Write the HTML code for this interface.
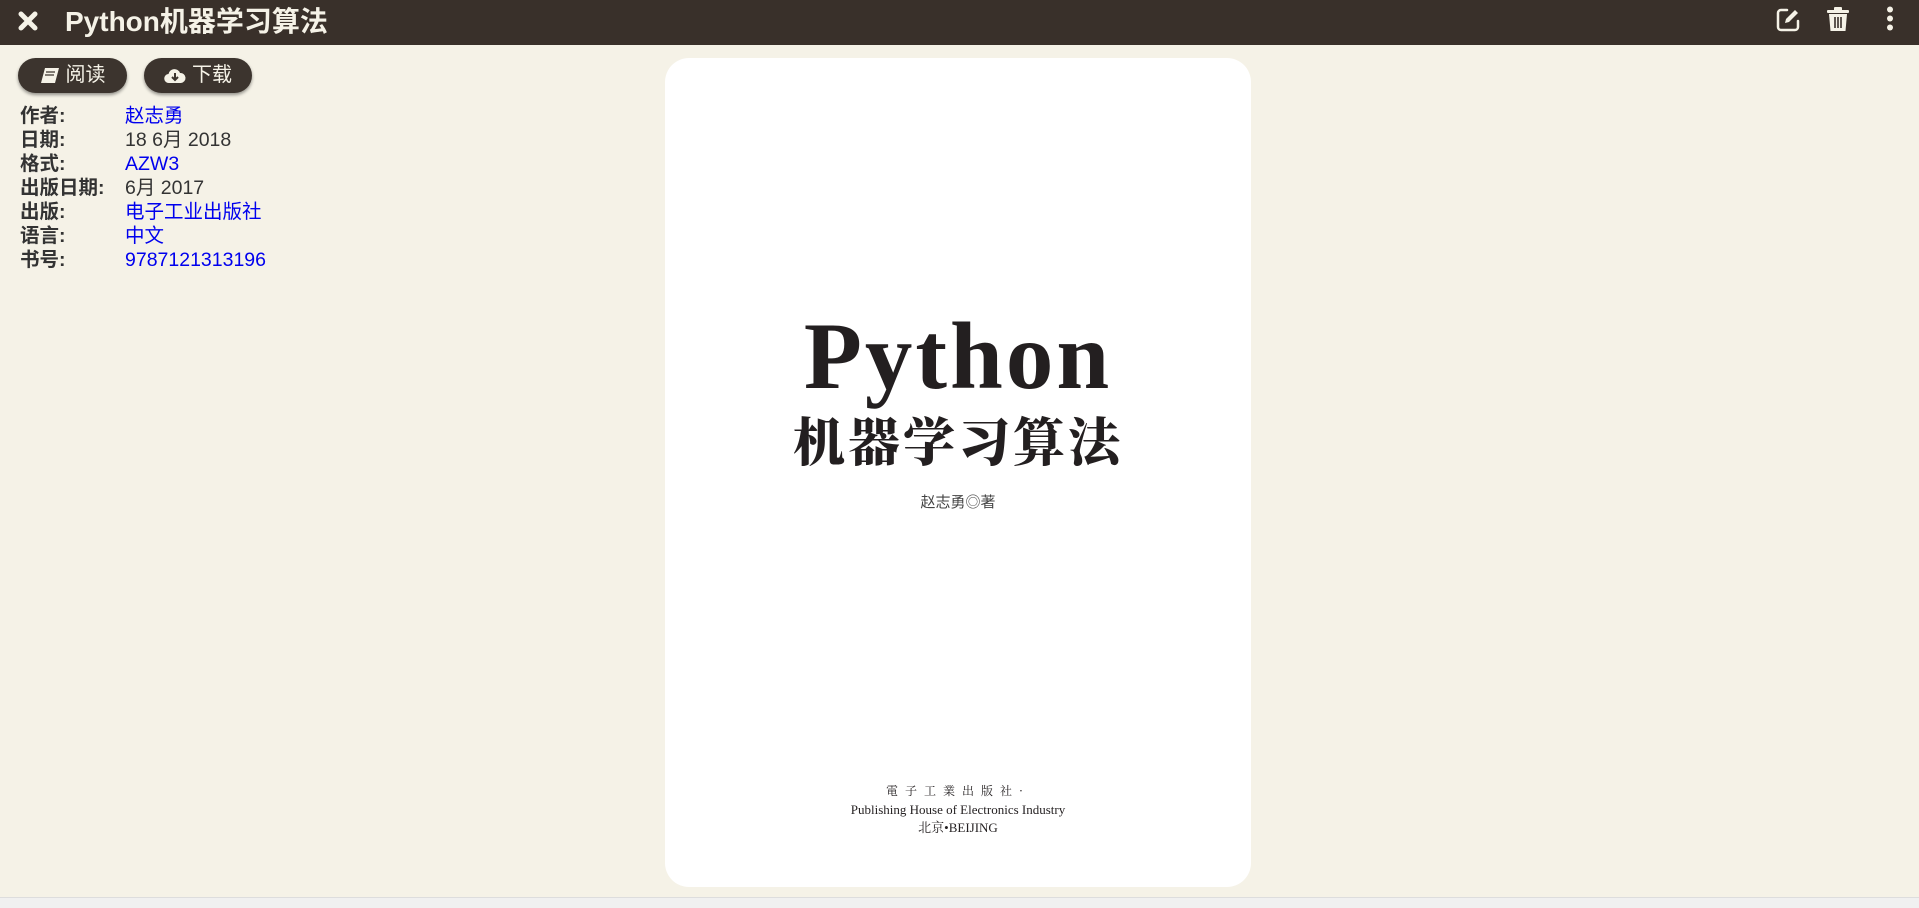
<!DOCTYPE html>
<html><head><meta charset="utf-8"><style>
*{margin:0;padding:0;box-sizing:border-box}
body{width:1919px;height:908px;background:#f5f2e7;font-family:"Liberation Sans","Noto Sans CJK SC",sans-serif;position:relative;overflow:hidden}
.hdr{position:absolute;left:0;top:0;width:1919px;height:45px;background:#39302a;color:#f5f2e7}
.title{position:absolute;left:65px;top:4px;font-size:28px;font-weight:bold;line-height:36px}
.btn{position:absolute;top:58px;height:35px;border-radius:18px;background:#3c342e;color:#f5f2e7;font-size:20px;line-height:35px;box-shadow:0 2px 3px rgba(0,0,0,.4);display:flex;align-items:center;justify-content:center;gap:6px}
.info{position:absolute;left:20px;top:104px;font-size:19.5px;line-height:24px;color:#333}
.info div{display:flex}
.info b{width:105px;display:inline-block}
.info a{color:#0000ee;text-decoration:none}
.cover{position:absolute;left:665px;top:58px;width:586px;height:829px;background:#fff;border-radius:24px;text-align:center;color:#231f20}
.foot{position:absolute;left:0;top:897px;width:1919px;height:11px;background:#f0f0f0;border-top:1px solid #ddd}
</style></head><body>
<div class="hdr">
<svg style="position:absolute;left:17px;top:10px" width="22" height="22" viewBox="0 0 22 22"><path d="M4 4L18 18M18 4L4 18" stroke="#f5f2e7" stroke-width="5" stroke-linecap="round"/></svg>
<div class="title">Python机器学习算法</div>
<svg style="position:absolute;left:1774px;top:6px" width="28" height="28" viewBox="0 0 28 28"><path d="M13 4H7a3 3 0 0 0-3 3v14a3 3 0 0 0 3 3h14a3 3 0 0 0 3-3v-6" fill="none" stroke="#f5f2e7" stroke-width="2.5" stroke-linecap="round"/><path d="M11 17l1-4L21 4l3 3-9 9z" fill="#f5f2e7"/></svg>
<svg style="position:absolute;left:1826px;top:6px" width="24" height="26" viewBox="0 0 24 26"><rect x="1" y="4" width="22" height="3" rx="1" fill="#f5f2e7"/><rect x="8" y="1" width="8" height="4" rx="1" fill="#f5f2e7"/><path d="M3 8h18l-1.5 17h-15z" fill="#f5f2e7"/><path d="M9 11v11M12 11v11M15 11v11" stroke="#39302a" stroke-width="1.6"/></svg>
<svg style="position:absolute;left:1885px;top:6px" width="10" height="26" viewBox="0 0 10 26"><circle cx="5" cy="3.5" r="3" fill="#f5f2e7"/><circle cx="5" cy="12.5" r="3" fill="#f5f2e7"/><circle cx="5" cy="21.5" r="3" fill="#f5f2e7"/></svg>
</div>
<div class="btn" style="left:18px;width:109px"><svg width="20" height="18" viewBox="0 0 20 18"><path d="M5 1h14l-4 15H1z" fill="#f5f2e7"/><path d="M6 5h9M5 8h9" stroke="#3c342e" stroke-width="1.3"/></svg>阅读</div>
<div class="btn" style="left:144px;width:108px"><svg width="22" height="16" viewBox="0 0 22 16"><path d="M5 15a4.5 4.5 0 0 1-.5-9A6 6 0 0 1 16 5a5 5 0 0 1 1 10z" fill="#f5f2e7"/><path d="M11 5v6M8 9l3 3 3-3" stroke="#3c342e" stroke-width="2" fill="none"/></svg>下载</div>
<div class="info">
<div><b>作者:</b><a>赵志勇</a></div>
<div><b>日期:</b><span>18 6月 2018</span></div>
<div><b>格式:</b><a>AZW3</a></div>
<div><b>出版日期:</b><span>6月 2017</span></div>
<div><b>出版:</b><a>电子工业出版社</a></div>
<div><b>语言:</b><a>中文</a></div>
<div><b>书号:</b><a>9787121313196</a></div>
</div>
<div class="cover">
<div style="position:absolute;left:0;right:0;top:246px;font-family:'Liberation Serif',serif;font-weight:bold;font-size:95px;line-height:104px;letter-spacing:3px">Python</div>
<div style="position:absolute;left:0;right:0;top:357px;font-family:'Liberation Serif','Noto Serif CJK SC',serif;font-weight:900;font-size:52px;line-height:60px;letter-spacing:3px">机器学习算法</div>
<div style="position:absolute;left:0;right:0;top:435px;font-size:15px;line-height:20px;color:#444">赵志勇◎著</div>
<div style="position:absolute;left:0;right:0;top:725px;font-family:'Noto Serif CJK SC',serif;font-size:12px;letter-spacing:7px;line-height:16px">電子工業出版社·</div>
<div style="position:absolute;left:0;right:0;top:744px;font-family:'Liberation Serif',serif;font-size:13px;line-height:16px">Publishing House of Electronics Industry</div>
<div style="position:absolute;left:0;right:0;top:762px;font-family:'Liberation Serif','Noto Serif CJK SC',serif;font-size:13px;line-height:16px">北京•BEIJING</div>
</div>
<div class="foot"></div>
</body></html>
